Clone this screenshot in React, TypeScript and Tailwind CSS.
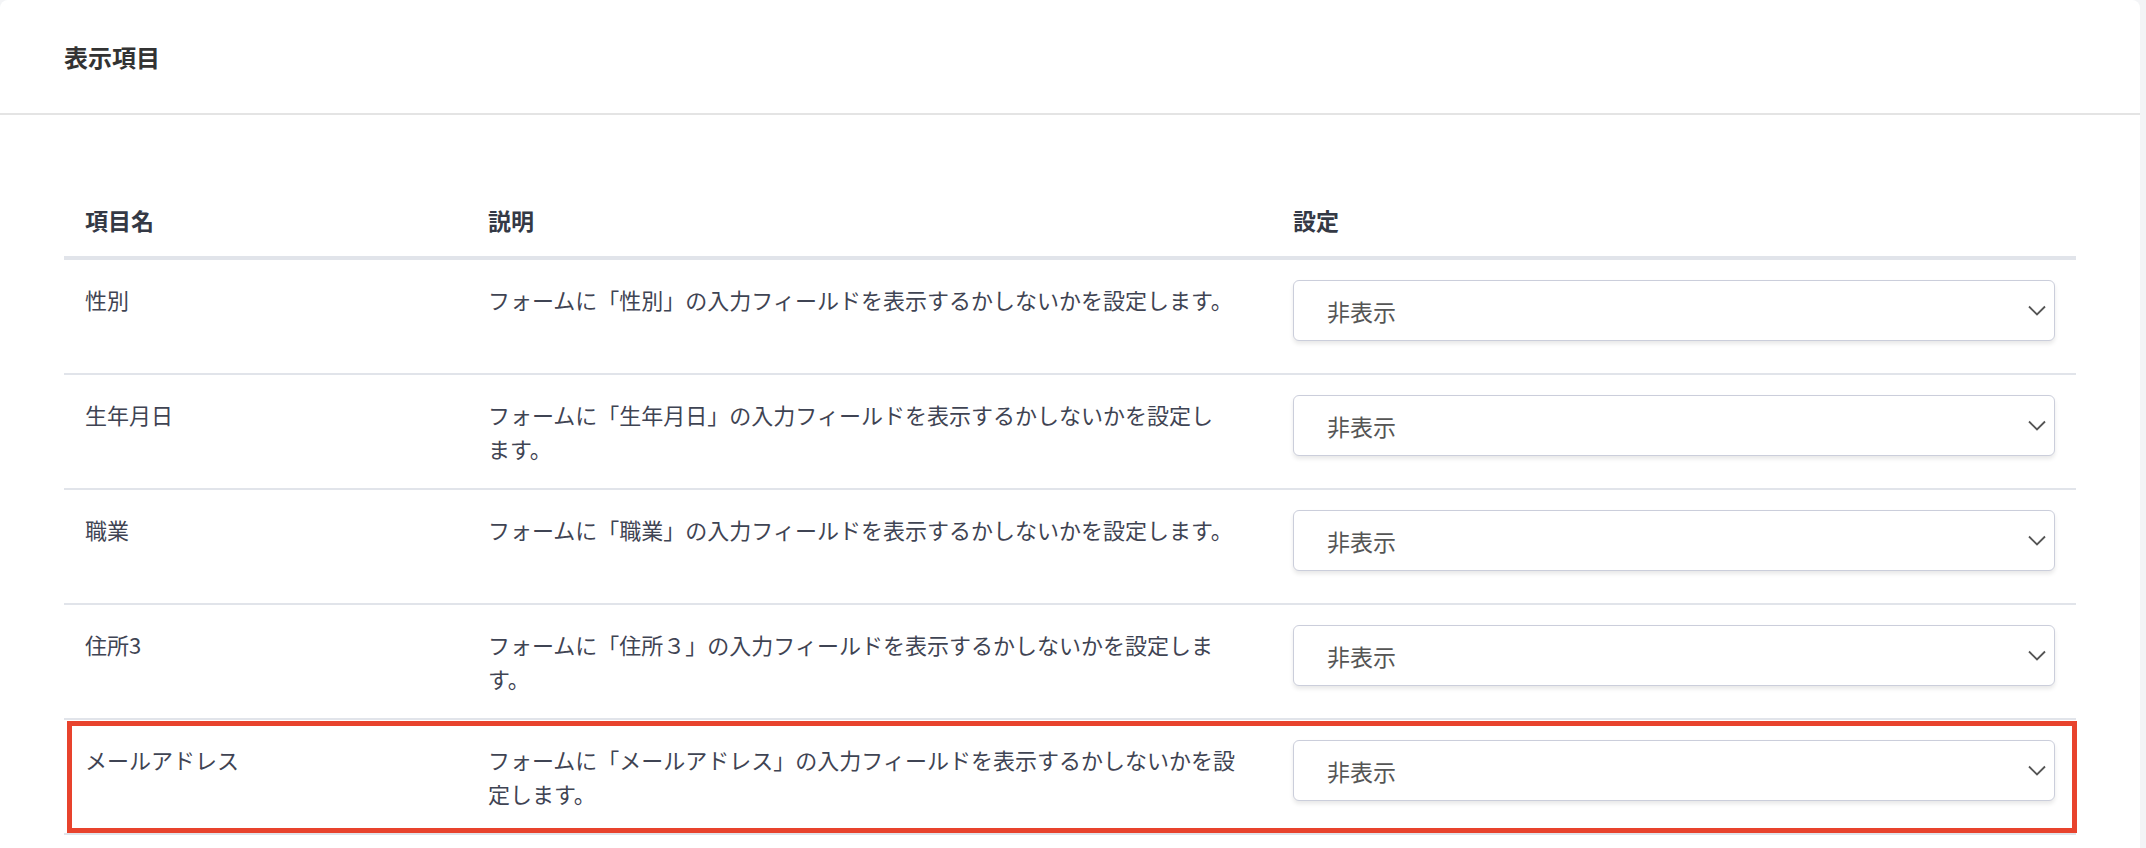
import React from 'react';

interface FieldRow {
  name: string;
  lines: string[];
  highlighted?: boolean;
}

const rows: FieldRow[] = [
  { name: '性別', lines: ['フォームに「性別」の入力フィールドを表示するかしないかを設定します。'] },
  {
    name: '生年月日',
    lines: ['フォームに「生年月日」の入力フィールドを表示するかしないかを設定し', 'ます。'],
  },
  { name: '職業', lines: ['フォームに「職業」の入力フィールドを表示するかしないかを設定します。'] },
  {
    name: '住所3',
    lines: ['フォームに「住所３」の入力フィールドを表示するかしないかを設定しま', 'す。'],
  },
  {
    name: 'メールアドレス',
    lines: ['フォームに「メールアドレス」の入力フィールドを表示するかしないかを設', '定します。'],
    highlighted: true,
  },
];

function SelectBox() {
  return (
    <div className="h-[61px] w-full bg-white border border-[#cbcedb] rounded-md shadow-[0_3px_4px_rgba(0,0,0,0.09)] flex items-center justify-between pl-[33px] pr-[8px]">
      <span className="text-[23px] text-[#555]">非表示</span>
      <svg width="18" height="11" viewBox="0 0 18 11" fill="none">
        <polyline points="1,1.5 9,9.5 17,1.5" stroke="#555" strokeWidth="1.8" />
      </svg>
    </div>
  );
}

export default function App() {
  return (
    <div
      className="h-[848px] bg-[#f3f4f6] pr-[6px]"
      style={{ fontFamily: '"Noto Sans CJK JP", "Noto Sans", sans-serif' }}
    >
      <div className="h-full bg-white rounded-t-lg overflow-hidden">
        <div className="h-[115px] border-b-2 border-[#e4e4e4] flex items-center px-16">
          <h2 className="text-[24px] font-bold text-[#333]">表示項目</h2>
        </div>

        <div className="px-16 pt-[88px]">
          <div className="grid grid-cols-[403px_805px_1fr] border-b-4 border-[#e1e4ea] text-[23px] font-bold leading-[34px] text-[#343945]">
            <div className="px-[21px] pb-[19px]">項目名</div>
            <div className="px-[21px] pb-[19px]">説明</div>
            <div className="px-[21px] pb-[19px]">設定</div>
          </div>

          {rows.map((row) => (
            <div
              key={row.name}
              className="relative grid grid-cols-[403px_805px_1fr] border-b-2 border-[#e1e4ea] text-[22px] leading-[34px] text-[#3f4453]"
            >
              <div className="px-[21px] pt-[22px]">{row.name}</div>
              <div className="px-[21px] pt-[22px]">
                {row.lines.map((line) => (
                  <div key={line} className="whitespace-nowrap">
                    {line}
                  </div>
                ))}
              </div>
              <div className="px-[21px] pt-5 pb-8">
                <SelectBox />
              </div>
              {row.highlighted && (
                <div className="absolute left-[3px] right-[-1px] top-px bottom-0 border-[5px] border-[#e8432d] pointer-events-none" />
              )}
            </div>
          ))}
        </div>
      </div>
    </div>
  );
}
